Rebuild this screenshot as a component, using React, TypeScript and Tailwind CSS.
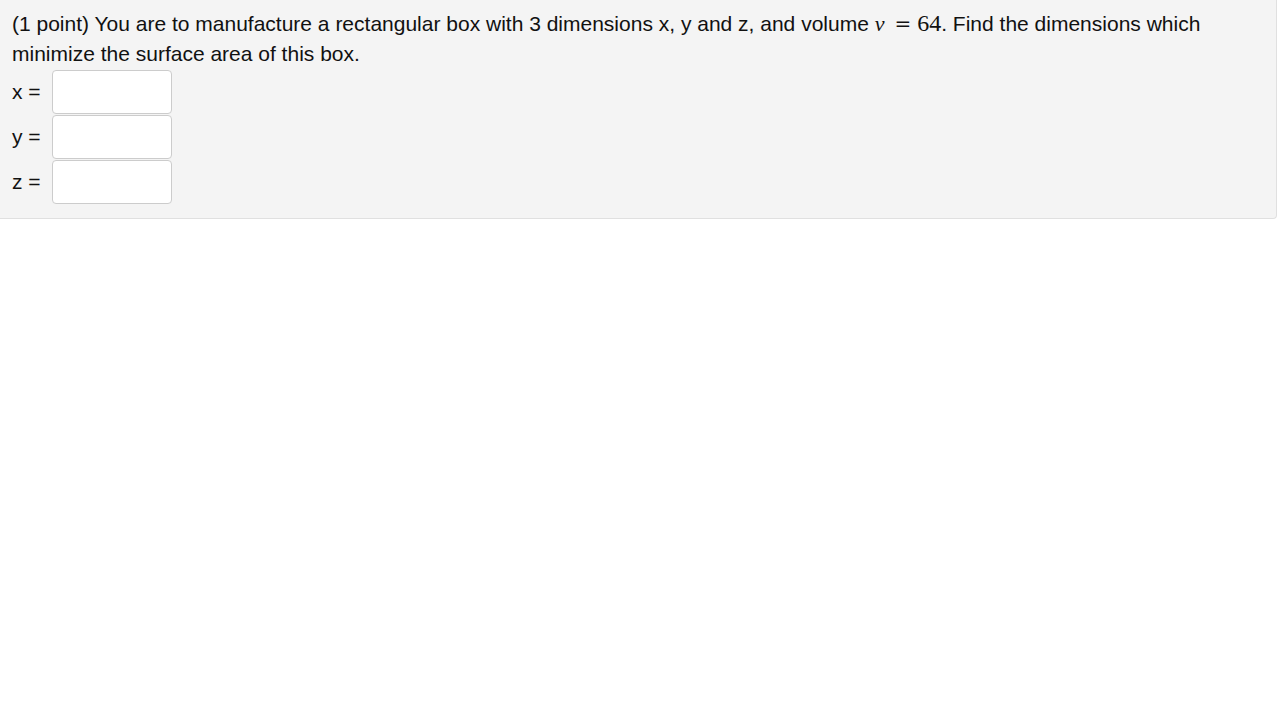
export default function App() {
  const rows = ["x", "y", "z"];
  return (
    <div className="min-h-[705px] bg-white">
      <div
        className="mr-[2px] rounded-br-[4px] border-r border-b border-[#e0e0e0] bg-[#f4f4f4] px-[12px] pt-[9px] pb-[14px] text-[21px] leading-[30px] text-[#111]"
        style={{ fontFamily: '"Liberation Sans", Arial, sans-serif' }}
      >
        <p>
          (1 point) You are to manufacture a rectangular box with 3 dimensions x, y and z, and volume{" "}
          <span className="font-['Liberation_Serif',serif] text-[22px] leading-[20px]">
            <i>v</i>
            <span className="ml-[10px] mr-[6px] font-['DejaVu_Serif',serif] text-[20px] leading-[20px]">=</span>
            <span className="text-[24px] leading-[20px]">64</span>
          </span>
          . Find the dimensions which minimize the surface area of this box.
        </p>
        <div className="mt-[1px] flex flex-col gap-[1px]">
          {rows.map((r) => (
            <div key={r} className="flex items-center">
              <span className="w-[40px]">{r} =</span>
              <input
                type="text"
                className="h-[44px] w-[120px] rounded-[4px] border border-[#ccc] bg-white px-2 outline-none"
              />
            </div>
          ))}
        </div>
      </div>
    </div>
  );
}
